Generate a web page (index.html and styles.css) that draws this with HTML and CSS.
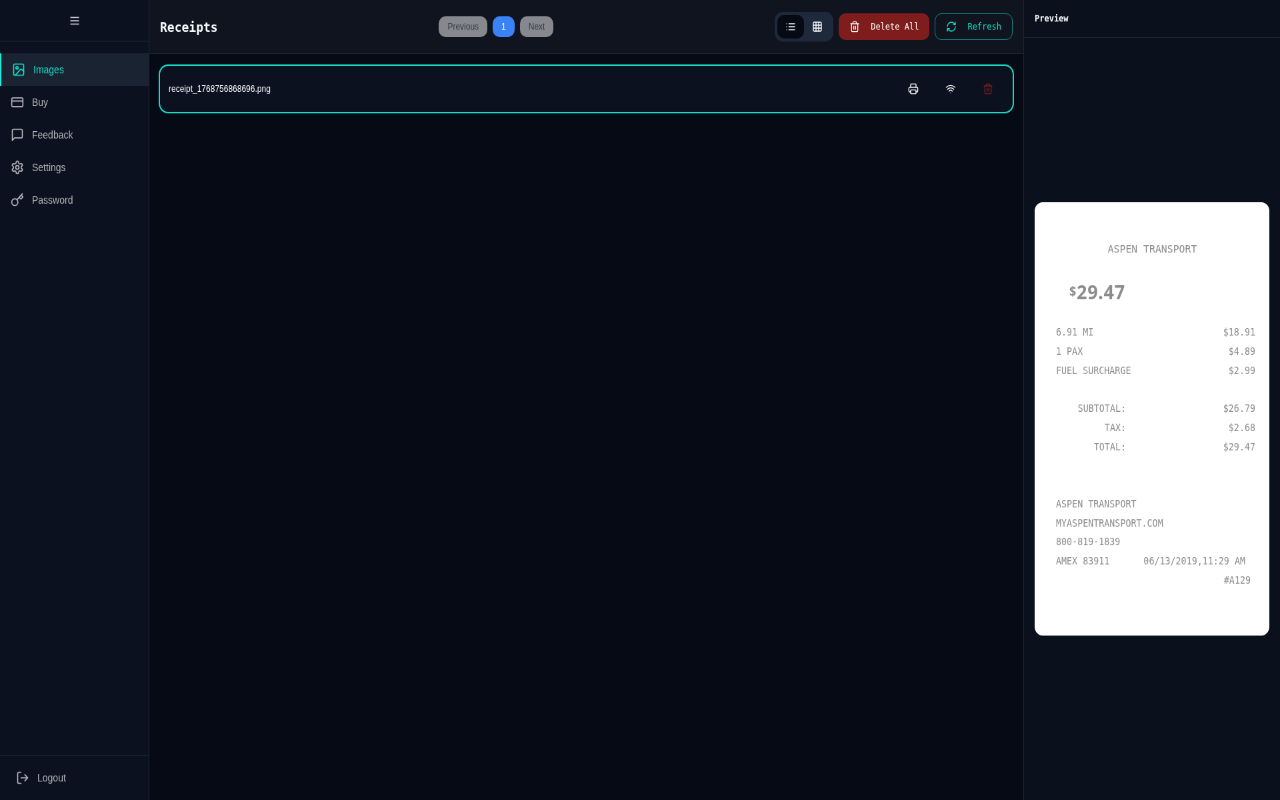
FILE: index.html
```
<!DOCTYPE html>
<html lang="en">
<head>
    <meta charset="UTF-8">
    <meta name="viewport" content="width=device-width, initial-scale=1.0">
    <title>Receipts</title>
    <link rel="stylesheet" href="styles.css">
</head>
<body>
    <div class="screen">
    <div class="app">
        <aside class="sidebar">
            <div class="sidebar-top">
                <button class="menu-button">
                    <svg width="14" height="12" viewBox="0 0 14 12"><path d="M0.5 1.5h13M0.5 6h13M0.5 10.5h13"/></svg>
                </button>
            </div>
            <nav class="nav">
                <a class="nav-item active">
                    <svg class="icon" viewBox="0 0 24 24"><rect x="3" y="3" width="18" height="18" rx="2"/><circle cx="9" cy="9" r="2"/><path d="m21 15-3.086-3.086a2 2 0 0 0-2.828 0L6 21"/></svg>
                    <span>Images</span>
                </a>
                <a class="nav-item">
                    <svg class="icon" viewBox="0 0 24 24"><rect x="2" y="5" width="20" height="14" rx="2"/><path d="M2 10h20"/></svg>
                    <span>Buy</span>
                </a>
                <a class="nav-item">
                    <svg class="icon" viewBox="0 0 24 24"><path d="M21 15a2 2 0 0 1-2 2H7l-4 4V5a2 2 0 0 1 2-2h14a2 2 0 0 1 2 2z"/></svg>
                    <span>Feedback</span>
                </a>
                <a class="nav-item">
                    <svg class="icon" viewBox="0 0 24 24"><path d="M12.22 2h-.44a2 2 0 0 0-2 2v.18a2 2 0 0 1-1 1.73l-.43.25a2 2 0 0 1-2 0l-.15-.08a2 2 0 0 0-2.73.73l-.22.38a2 2 0 0 0 .73 2.73l.15.1a2 2 0 0 1 1 1.72v.51a2 2 0 0 1-1 1.74l-.15.09a2 2 0 0 0-.73 2.73l.22.38a2 2 0 0 0 2.73.73l.15-.08a2 2 0 0 1 2 0l.43.25a2 2 0 0 1 1 1.73V20a2 2 0 0 0 2 2h.44a2 2 0 0 0 2-2v-.18a2 2 0 0 1 1-1.73l.43-.25a2 2 0 0 1 2 0l.15.08a2 2 0 0 0 2.73-.73l.22-.39a2 2 0 0 0-.73-2.73l-.15-.08a2 2 0 0 1-1-1.74v-.5a2 2 0 0 1 1-1.74l.15-.09a2 2 0 0 0 .73-2.73l-.22-.38a2 2 0 0 0-2.73-.73l-.15.08a2 2 0 0 1-2 0l-.43-.25a2 2 0 0 1-1-1.73V4a2 2 0 0 0-2-2z"/><circle cx="12" cy="12" r="3"/></svg>
                    <span>Settings</span>
                </a>
                <a class="nav-item">
                    <svg class="icon" viewBox="0 0 24 24"><circle cx="7.5" cy="15.5" r="5.5"/><path d="m21 2-9.6 9.6M15.5 7.5l3 3L22 7l-3-3"/></svg>
                    <span>Password</span>
                </a>
            </nav>
            <div class="sidebar-bottom">
                <a class="logout">
                    <svg class="icon" viewBox="0 0 24 24"><path d="M9 21H5a2 2 0 0 1-2-2V5a2 2 0 0 1 2-2h4M16 17l5-5-5-5M21 12H9"/></svg>
                    <span>Logout</span>
                </a>
            </div>
        </aside>

        <main class="main">
            <header class="toolbar">
                <h1>Receipts</h1>
                <div class="pagination">
                    <button class="page-button">Previous</button>
                    <button class="page-button current">1</button>
                    <button class="page-button">Next</button>
                </div>
                <div class="actions">
                    <div class="view-toggle">
                        <button class="toggle selected">
                            <svg class="icon small" viewBox="0 0 24 24"><path d="M8 6h13M8 12h13M8 18h13M3 6h.01M3 12h.01M3 18h.01"/></svg>
                        </button>
                        <button class="toggle">
                            <svg class="icon small" viewBox="0 0 24 24"><rect x="3" y="3" width="18" height="18" rx="2"/><path d="M3 9h18M3 15h18M9 3v18M15 3v18"/></svg>
                        </button>
                    </div>
                    <button class="action delete">
                        <svg class="icon small" viewBox="0 0 24 24"><path d="M3 6h18M19 6v14a2 2 0 0 1-2 2H7a2 2 0 0 1-2-2V6M8 6V4a2 2 0 0 1 2-2h4a2 2 0 0 1 2 2v2M10 11v6M14 11v6"/></svg>
                        <span>Delete All</span>
                    </button>
                    <button class="action refresh">
                        <svg class="icon small" viewBox="0 0 24 24"><path d="M3 12a9 9 0 0 1 9-9 9.75 9.75 0 0 1 6.74 2.74L21 8M21 3v5h-5M21 12a9 9 0 0 1-9 9 9.75 9.75 0 0 1-6.74-2.74L3 16M8 16H3v5"/></svg>
                        <span>Refresh</span>
                    </button>
                </div>
            </header>
            <div class="list">
                <div class="file-row">
                    <span class="file-name">receipt_1768756868696.png</span>
                    <div class="file-actions">
                        <button class="row-button">
                            <svg class="icon small" viewBox="0 0 24 24"><path d="M6 18H4a2 2 0 0 1-2-2v-5a2 2 0 0 1 2-2h16a2 2 0 0 1 2 2v5a2 2 0 0 1-2 2h-2M6 9V3a1 1 0 0 1 1-1h10a1 1 0 0 1 1 1v6"/><rect x="6" y="14" width="12" height="8" rx="1"/></svg>
                        </button>
                        <button class="row-button">
                            <svg class="icon small" viewBox="0 0 24 24"><path d="M12 20h.01M2 8.82a15 15 0 0 1 20 0M5 12.859a10 10 0 0 1 14 0M8.5 16.429a5 5 0 0 1 7 0"/></svg>
                        </button>
                        <button class="row-button danger">
                            <svg class="icon small" viewBox="0 0 24 24"><path d="M3 6h18M19 6v14a2 2 0 0 1-2 2H7a2 2 0 0 1-2-2V6M8 6V4a2 2 0 0 1 2-2h4a2 2 0 0 1 2 2v2M10 11v6M14 11v6"/></svg>
                        </button>
                    </div>
                </div>
            </div>
        </main>

        <aside class="preview">
            <div class="preview-header">Preview</div>
            <div class="preview-body">
                <div class="receipt">
                    <div class="receipt-title">ASPEN TRANSPORT</div>
                    <div class="receipt-total"><span class="currency">$</span>29.47</div>
                    <div class="line"><span>6.91 MI</span><span>$18.91</span></div>
                    <div class="line"><span>1 PAX</span><span>$4.89</span></div>
                    <div class="line"><span>FUEL SURCHARGE</span><span>$2.99</span></div>
                    <div class="line sum first"><span>SUBTOTAL:</span><span>$26.79</span></div>
                    <div class="line sum"><span>TAX:</span><span>$2.68</span></div>
                    <div class="line sum"><span>TOTAL:</span><span>$29.47</span></div>
                    <div class="line company"><span>ASPEN TRANSPORT</span></div>
                    <div class="line"><span>MYASPENTRANSPORT.COM</span></div>
                    <div class="line"><span>800-819-1839</span></div>
                    <div class="line card"><span>AMEX 83911</span><span>06/13/2019,11:29 AM</span></div>
                    <div class="line number"><span>#A129</span></div>
                </div>
            </div>
        </aside>
    </div>
    </div>
</body>
</html>
```
FILE: styles.css
```
* {
    box-sizing: border-box;
}
body {
    margin: 0;
    background-color: #060a14;
}
button {
    font-family: inherit;
    font-size: inherit;
    color: inherit;
    background: none;
    border: none;
    padding: 0;
    cursor: pointer;
}
.screen {
    width: 1280px;
    height: 800px;
    overflow: hidden;
}
.app {
    display: flex;
    width: 1920px;
    height: 1080px;
    transform: scale(0.66667, 0.74074);
    transform-origin: 0 0;
    will-change: transform;
    font-family: "Liberation Sans", Arial, sans-serif;
    font-size: 14px;
    color: #f8fafc;
}
.icon {
    width: 20px;
    height: 20px;
    flex-shrink: 0;
    fill: none;
    stroke: currentColor;
    stroke-width: 2;
    stroke-linecap: round;
    stroke-linejoin: round;
}
.icon.small {
    width: 16px;
    height: 16px;
}

/* Sidebar */
.sidebar {
    display: flex;
    flex-direction: column;
    width: 224px;
    background-color: #0b111e;
    border-right: 1px solid #1e2533;
    color: #b2b4b8;
}
.sidebar-top {
    display: flex;
    align-items: center;
    justify-content: center;
    height: 56px;
    border-bottom: 1px solid #1e2836;
}
.menu-button svg {
    display: block;
    stroke: #d4d6da;
    stroke-width: 1.7;
}
.nav {
    flex: 1;
    padding-top: 16px;
}
.nav-item {
    display: flex;
    align-items: center;
    gap: 12px;
    height: 44px;
    padding: 0 16px;
}
.nav-item.active {
    background-color: #1a2332;
    border-left: 2px solid #14f0dc;
    color: #14dcc8;
}
.sidebar-bottom {
    padding: 8px;
    border-top: 1px solid #192a35;
}
.logout {
    display: flex;
    align-items: center;
    gap: 12px;
    height: 44px;
    padding: 0 16px;
}

/* Main column */
.main {
    flex: 1;
    display: flex;
    flex-direction: column;
    background-color: #060a14;
}
.toolbar {
    display: flex;
    align-items: center;
    justify-content: space-between;
    height: 73px;
    padding: 0 16px;
    background-color: #10141f;
    border-bottom: 1px solid #202636;
}
.toolbar h1 {
    margin: 0;
    font-family: "DejaVu Sans Mono", monospace;
    font-size: 18px;
    font-weight: bold;
}
.pagination {
    display: flex;
    gap: 8px;
}
.page-button {
    height: 28px;
    padding: 0 13px;
    border-radius: 10px;
    background-color: #87888d;
    color: #333a48;
    font-size: 12px;
}
.page-button.current {
    background-color: #3b82f6;
    color: #ffffff;
}
.actions {
    display: flex;
    align-items: center;
    gap: 8px;
    font-family: "DejaVu Sans Mono", monospace;
    font-size: 12px;
}
.view-toggle {
    display: flex;
    padding: 4px;
    border-radius: 12px;
    background-color: #1e293b;
}
.toggle {
    display: flex;
    align-items: center;
    justify-content: center;
    width: 40px;
    height: 32px;
    border-radius: 10px;
}
.toggle.selected {
    background-color: #060a14;
}
.action {
    display: flex;
    align-items: center;
    gap: 16px;
    height: 36px;
    padding: 0 16px;
    border-radius: 10px;
}
.delete {
    background-color: #7f1d1d;
}
.refresh {
    border: 1px solid #12877f;
    color: #14dcc8;
}
.list {
    padding: 16px;
}
.file-row {
    display: flex;
    align-items: center;
    justify-content: space-between;
    height: 62px;
    padding: 0 13px;
    border-radius: 12px;
    background-color: #0b111e;
    box-shadow: 0 0 0 2px #14dcc8;
    font-size: 12px;
}
.file-actions {
    display: flex;
    gap: 8px;
}
.row-button {
    display: flex;
    align-items: center;
    justify-content: center;
    width: 48px;
    height: 36px;
}
.row-button.danger {
    color: #7f1d1d;
}

/* Preview column */
.preview {
    display: flex;
    flex-direction: column;
    width: 385px;
    border-left: 1px solid #1e2533;
    background-color: #0b111c;
}
.preview-header {
    height: 51px;
    padding: 0 16px;
    border-bottom: 1px solid #1e2533;
    font-family: "DejaVu Sans Mono", monospace;
    font-size: 12px;
    font-weight: bold;
    line-height: 50px;
}
.preview-body {
    flex: 1;
    display: flex;
    align-items: center;
    padding: 0 16px;
}
.receipt {
    width: 352px;
    height: 585px;
    padding: 50px 21px 0 32px;
    border-radius: 12px;
    background-color: #ffffff;
    color: #8c8c8c;
    font-family: "DejaVu Sans Mono", monospace;
    font-size: 13.35px;
}
.receipt-title {
    padding-right: 10px;
    font-size: 14.8px;
    line-height: 26px;
    text-align: center;
}
.receipt-total {
    display: flex;
    align-items: center;
    height: 36px;
    margin: 26px 0 25px 20px;
    font-family: "Noto Sans", sans-serif;
    font-size: 27px;
    font-weight: bold;
    letter-spacing: 0.7px;
}
.currency {
    font-size: 18px;
}
.line {
    display: flex;
    justify-content: space-between;
    line-height: 25.75px;
}
.line.first {
    margin-top: 25.75px;
}
.sum span:first-child {
    width: 105px;
    text-align: right;
}
.company {
    margin-top: 51.5px;
}
.card {
    padding-right: 15px;
}
.number {
    justify-content: flex-end;
    padding-right: 7px;
}
```
